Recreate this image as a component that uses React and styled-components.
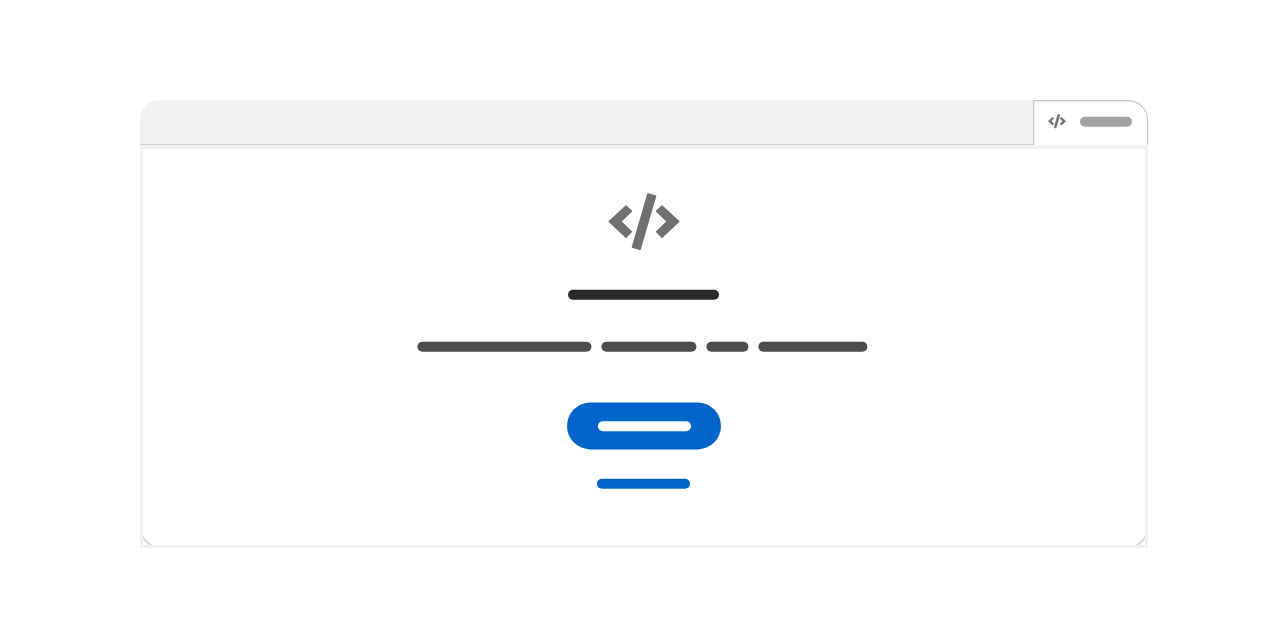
import React from "react";
import styled, { createGlobalStyle } from "styled-components";

const GlobalStyle = createGlobalStyle`
  *, *::before, *::after { box-sizing: border-box; }
  body { margin: 0; background: #fff; font-family: "Liberation Sans", sans-serif; }
`;

const Page = styled.main`
  display: flex;
  justify-content: center;
  height: 644px;
  padding-top: 100px;
`;

const Window = styled.section`
  display: flex;
  flex-direction: column;
  width: 1008px;
  height: 448px;
`;

const TabBar = styled.header`
  display: flex;
  height: 45px;
`;

const TabStrip = styled.div`
  flex: 1;
  background: #f1f1f1;
  border-bottom: 1px solid #d4d4d4;
  border-top-left-radius: 20px;
`;

const Tab = styled.div`
  display: flex;
  align-items: center;
  gap: 13.5px;
  width: 115px;
  padding: 0 0 3px 14px;
  border: 1px solid #c4c4c4;
  border-left-color: #cacaca;
  border-bottom: 0;
  border-top-right-radius: 20px;
  box-shadow: inset 0.5px 0.5px 0 #dedede;
`;

const Panel = styled.div`
  position: relative;
  flex: 1;
  display: flex;
  flex-direction: column;
  align-items: center;
  padding-top: 44px;
  overflow: hidden;
  background: #fff;
  border: 3px solid #f2f2f2;
  border-top-width: 4px;

  &::after {
    content: "";
    position: absolute;
    inset: -30px -3px -3px;
    border: 1.4px solid #bdbdbd;
    border-radius: 20px;
    box-shadow: inset 0 0 0 0.5px #d0d0d0;
    pointer-events: none;
  }
`;

const Icon = styled.svg`
  display: block;
  flex: none;
  width: ${(p) => p.$width}px;
  height: ${(p) => p.$height}px;
  fill: ${(p) => p.$color};
`;

const Bar = styled.span`
  display: block;
  flex: none;
  width: ${(p) => p.$width}px;
  height: 10px;
  border-radius: 5px;
  background: ${(p) => p.$color};
  transform: translate(${(p) => p.$nudgeX || 0}px, -0.25px);
`;

const Heading = styled.div`
  margin: 39px 1px 0 0;
`;

const Description = styled.div`
  display: flex;
  gap: 10px;
  margin: 42px 4px 0 0;
`;

const PrimaryButton = styled.div`
  display: flex;
  align-items: center;
  justify-content: center;
  width: 154px;
  height: 47px;
  margin-top: 50px;
  padding: 1px 0 0 1px;
  border-radius: 24px;
  background: #0265cc;
  transform: translateY(0.4px);
`;

const SecondaryLink = styled.div`
  margin: 30px 1px 0 0;
`;

function CodeIcon({ width, height, color, edge = 1.6 }) {
  return (
    <Icon $width={width} $height={height} $color={color} viewBox="0 0 72 58" aria-hidden="true">
      <g stroke={color} strokeWidth={edge} strokeLinejoin="round">
        <path d="M18 13.1 23.3 18.2 12.7 28.5 23.3 38.8 18 44.1 1.3 28.5Z" />
        <path d="M54 13.1 48.7 18.2 59.3 28.5 48.7 38.8 54 44.1 70.7 28.5Z" />
        <path d="M40 1 47.5 3 32 56.3 24.5 54.3Z" />
      </g>
    </Icon>
  );
}

const words = [174, 95, 42, 109];

export default function App() {
  return (
    <>
      <GlobalStyle />
      <Page>
        <Window>
          <TabBar>
            <TabStrip />
            <Tab>
              <CodeIcon width={18} height={14.5} color="#6e6e6e" edge={2.4} />
              <Bar $width={52} $color="#a2a2a2" />
            </Tab>
          </TabBar>
          <Panel>
            <CodeIcon width={72} height={58} color="#707070" />
            <Heading>
              <Bar $width={151.5} $color="#292929" />
            </Heading>
            <Description>
              {words.map((width) => (
                <Bar key={width} $width={width} $nudgeX={0.4} $color="#4d4d4d" />
              ))}
            </Description>
            <PrimaryButton>
              <Bar $width={93.5} $color="#fff" />
            </PrimaryButton>
            <SecondaryLink>
              <Bar $width={93.5} $color="#0265cc" />
            </SecondaryLink>
          </Panel>
        </Window>
      </Page>
    </>
  );
}
